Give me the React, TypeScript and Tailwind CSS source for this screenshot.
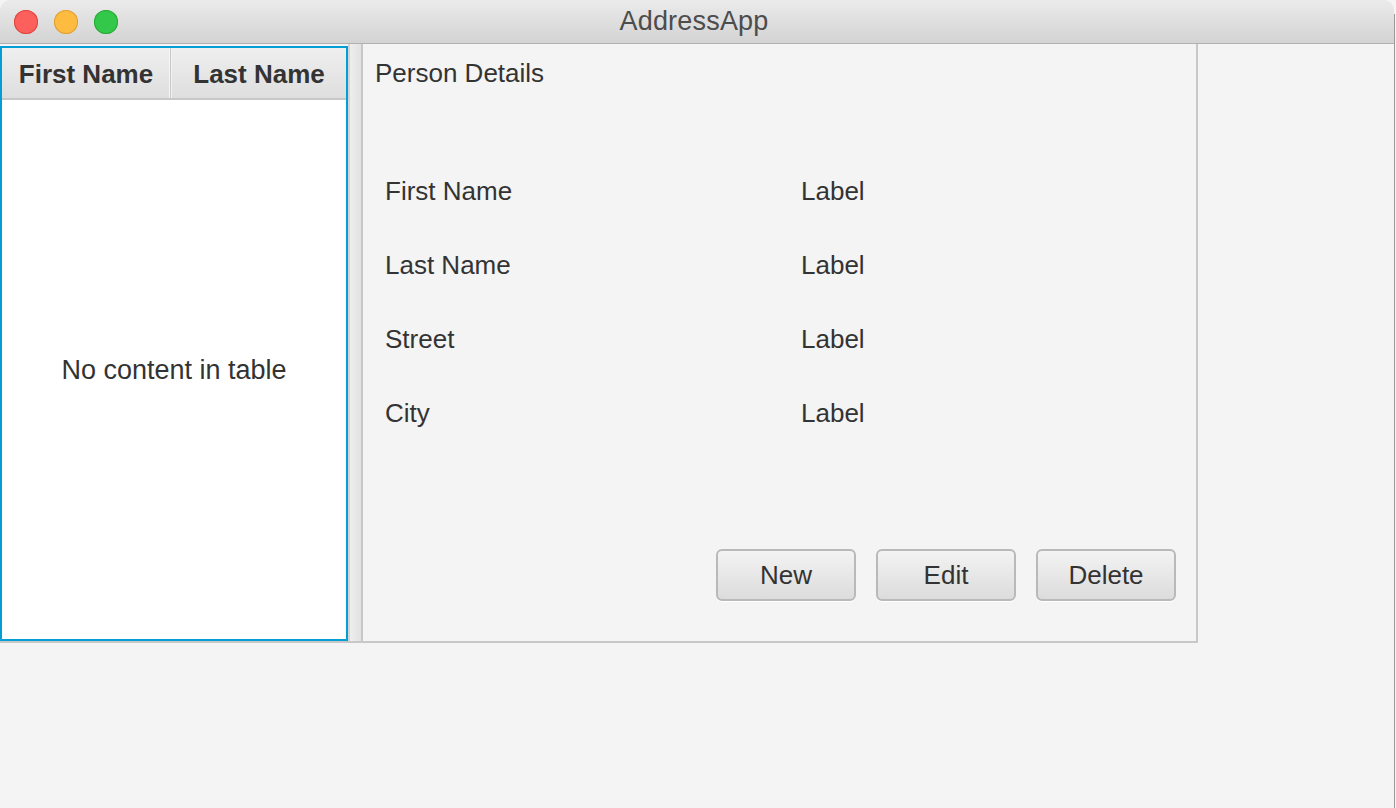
import React from "react";

const font = { fontFamily: '"Liberation Sans", Arial, Helvetica, sans-serif' };

function Light({ fill, stroke }: { fill: string; stroke: string }) {
  return (
    <div
      className="w-[24px] h-[24px] rounded-full"
      style={{ background: fill, boxShadow: `inset 0 0 0 1px ${stroke}` }}
    />
  );
}

function Btn({ label }: { label: string }) {
  return (
    <button className="w-[140px] h-[52px] rounded-[6px] border-2 border-[#b9b9b9] bg-gradient-to-b from-[#f3f3f3] to-[#dcdcdc] text-[26px] leading-[30px] text-[#333333] flex items-center justify-center shadow-[0_1px_0_#ffffff]">
      {label}
    </button>
  );
}

const rows = ["First Name", "Last Name", "Street", "City"];

export default function App() {
  return (
    <div className="w-[1396px] h-[808px] bg-[#f4f4f4] flex overflow-hidden" style={font}>
      <div className="w-[1394px] h-full flex flex-col rounded-t-[10px] overflow-hidden bg-[#f4f4f4]">
        {/* Title bar */}
        <div className="relative h-[44px] shrink-0 bg-gradient-to-b from-[#ebebeb] to-[#d3d3d3] border-b border-[#b1b1b1] flex items-center justify-center">
          <div className="absolute left-[14px] top-[10px] flex gap-[16px]">
            <Light fill="#fc605c" stroke="#e0443e" />
            <Light fill="#fdbc40" stroke="#de9f34" />
            <Light fill="#34c84a" stroke="#27aa35" />
          </div>
          <span className="text-[27px] leading-[30px] text-[#4d4d4d] -mt-[1px] ml-[-6px] tracking-[0.2px]">AddressApp</span>
        </div>

        {/* Split pane */}
        <div className="w-[1198px] h-[599px] flex border-r-2 border-b-2 border-[#c8c8c8] bg-[#f4f4f4]">
          {/* Table */}
          <div className="w-[348px] mt-[2px] border-2 border-[#039ed3] bg-white flex flex-col">
            <div className="h-[52px] flex border-b-2 border-[#c8c8c8] bg-gradient-to-b from-[#efefef] to-[#dedede]">
              <div className="w-[169px] pt-[3px] border-r border-[#c8c8c8] shadow-[inset_-1px_0_0_#f6f6f6] flex items-center justify-center text-[26px] font-bold text-[#333333]">
                First Name
              </div>
              <div className="flex-1 pt-[3px] border-l border-[#f2f2f2] flex items-center justify-center text-[26px] font-bold text-[#333333]">
                Last Name
              </div>
            </div>
            <div className="flex-1 flex items-center justify-center pt-[2px] text-[27px] text-[#333333]">
              No content in table
            </div>
          </div>

          {/* Divider */}
          <div className="w-[15px] flex">
            <div className="w-[2px] bg-[#d4d4d4]" />
            <div className="flex-1 bg-gradient-to-r from-[#eeeeee] to-[#e2e2e2]" />
            <div className="w-[2px] bg-[#c8c8c8]" />
          </div>

          {/* Right pane */}
          <div className="flex-1 flex flex-col text-[#333333]">
            <div className="pl-[12px] pt-[14px] text-[26px] leading-[30px]">Person Details</div>
            <div className="mt-[88px] pl-[22px] grid grid-cols-[416px_1fr] gap-y-[44px] text-[26px] leading-[30px]">
              {rows.map((r) => (
                <React.Fragment key={r}>
                  <div>{r}</div>
                  <div>Label</div>
                </React.Fragment>
              ))}
            </div>
            <div className="mt-auto mb-[40px] mr-[20px] flex justify-end gap-[20px]">
              <Btn label="New" />
              <Btn label="Edit" />
              <Btn label="Delete" />
            </div>
          </div>
        </div>
      </div>
      <div className="w-[1px] h-full bg-[#9a9a9a] mt-[14px]" />
      <div className="w-[1px] h-full bg-[#f4f4f4]" />
    </div>
  );
}
